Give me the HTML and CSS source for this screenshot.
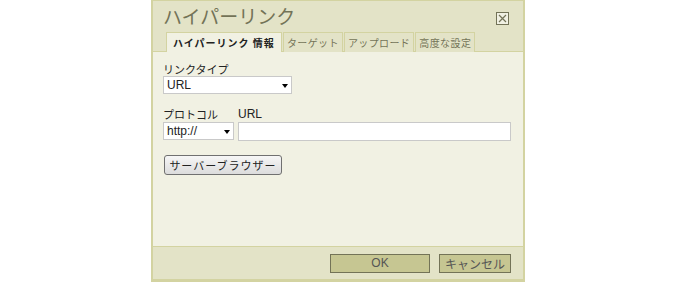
FILE: index.html
```html
<!DOCTYPE html>
<html lang="ja">
<head>
    <meta charset="UTF-8">
    <title>ハイパーリンク</title>
    <link rel="stylesheet" href="styles.css">
</head>
<body>
    <div class="dialog">
        <div class="dialog-header">
            <div class="title-row">
                <span class="title">ハイパーリンク</span>
                <span class="close">
                    <svg width="13" height="13" viewBox="0 0 13 13">
                        <rect x="0.5" y="0.5" width="12" height="12" fill="#f1f1e3" stroke="#737357"/>
                        <path d="M3 3 L10 10 M10 3 L3 10" stroke="#737357" stroke-width="1.2"/>
                    </svg>
                </span>
            </div>
            <div class="tabs">
                <span class="tab active">ハイパーリンク 情報</span>
                <span class="tab">ターゲット</span>
                <span class="tab">アップロード</span>
                <span class="tab">高度な設定</span>
            </div>
        </div>

        <div class="dialog-body">
            <div class="field">
                <label>リンクタイプ</label>
                <div class="select wide">URL<span class="arrow"></span></div>
            </div>

            <div class="field-row">
                <div class="field">
                    <label>プロトコル</label>
                    <div class="select narrow">http://<span class="arrow"></span></div>
                </div>
                <div class="field grow">
                    <label class="latin">URL</label>
                    <div class="text-input"></div>
                </div>
            </div>

            <button class="browse">サーバーブラウザー</button>
        </div>

        <div class="dialog-footer">
            <button class="btn ok">OK</button>
            <button class="btn">キャンセル</button>
        </div>
    </div>
</body>
</html>
```

FILE: styles.css
```css
body {
    margin: 0;
    padding-left: 151px;
    font-family: "Liberation Sans", "Noto Sans CJK JP", sans-serif;
    font-size: 12px;
    color: #222;
    background-color: #fff;
}

.dialog {
    width: 370px;
    height: 278px;
    border: 2px solid #d3d3a1;
    border-top-width: 1px;
    border-bottom-width: 3px;
    display: flex;
    flex-direction: column;
    background-color: #f1f1e3;
}

.dialog-header {
    background-color: #e3e3c7;
    border-bottom: 1px solid #d3d3a1;
    height: 50px;
    display: flex;
    flex-direction: column;
    justify-content: space-between;
}

.title-row {
    display: flex;
    justify-content: space-between;
    align-items: center;
    padding: 3px 14px 0 10px;
}

.title {
    font-family: "Noto Sans CJK JP", sans-serif;
    font-size: 19px;
    line-height: 24px;
    color: #737357;
}

.close {
    display: flex;
    margin-top: 4px;
}

.tabs {
    display: flex;
    padding-left: 13px;
    margin-bottom: -1px;
}

.tab {
    font-family: "Noto Sans CJK JP", sans-serif;
    font-size: 10px;
    letter-spacing: 0.4px;
    line-height: 19px;
    color: #737357;
    padding: 0 3px;
    border: 1px solid #d3d3a1;
    border-bottom: none;
    margin-right: 1px;
    background-color: #e3e3c7;
}

.tab.active {
    background-color: #f1f1e3;
    color: #222;
    font-weight: bold;
    letter-spacing: 1px;
    padding: 0 6px;
}

.dialog-body {
    flex: 1;
    padding: 10px 12px 0 10px;
}

.field {
    display: flex;
    flex-direction: column;
}

.field label {
    font-family: "Noto Sans CJK JP", sans-serif;
    font-size: 11px;
    line-height: 14px;
    height: 14px;
}

.field label.latin {
    font-family: "Liberation Sans", sans-serif;
    font-size: 12px;
}

.select {
    position: relative;
    height: 16px;
    line-height: 16px;
    background-color: #fff;
    border: 1px solid #c9c9c9;
    padding-left: 3px;
    font-size: 12px;
}

.select.wide {
    width: 124px;
}

.select.narrow {
    width: 66px;
}

.arrow {
    position: absolute;
    right: 3px;
    top: 7px;
    border-left: 3.5px solid transparent;
    border-right: 3.5px solid transparent;
    border-top: 4px solid #000;
}

.field-row {
    display: flex;
    gap: 4px;
    margin-top: 13px;
}

.field-row label {
    margin-bottom: 1px;
}

.grow {
    flex: 1;
}

.text-input {
    height: 17px;
    background-color: #fff;
    border: 1px solid #c9c9c9;
}

.browse {
    margin: 14px 0 0 1px;
    width: 118px;
    height: 20px;
    padding: 0;
    font-family: "Noto Sans CJK JP", sans-serif;
    font-size: 11px;
    letter-spacing: 1px;
    color: #222;
    border: 1px solid #707070;
    border-radius: 3px;
    background: linear-gradient(#f6f6f6, #dcdcdc);
}

.dialog-footer {
    height: 32px;
    background-color: #e3e3c7;
    border-top: 1px solid #d3d3a1;
    display: flex;
    justify-content: flex-end;
    align-items: center;
    gap: 9px;
    padding-right: 12px;
}

.btn {
    height: 19px;
    padding: 0;
    width: 72px;
    font-family: "Liberation Sans", "Noto Sans CJK JP", sans-serif;
    font-size: 12px;
    color: #555;
    background-color: #c6c692;
    border: 1px solid #737357;
}

.btn.ok {
    width: 100px;
}
```
